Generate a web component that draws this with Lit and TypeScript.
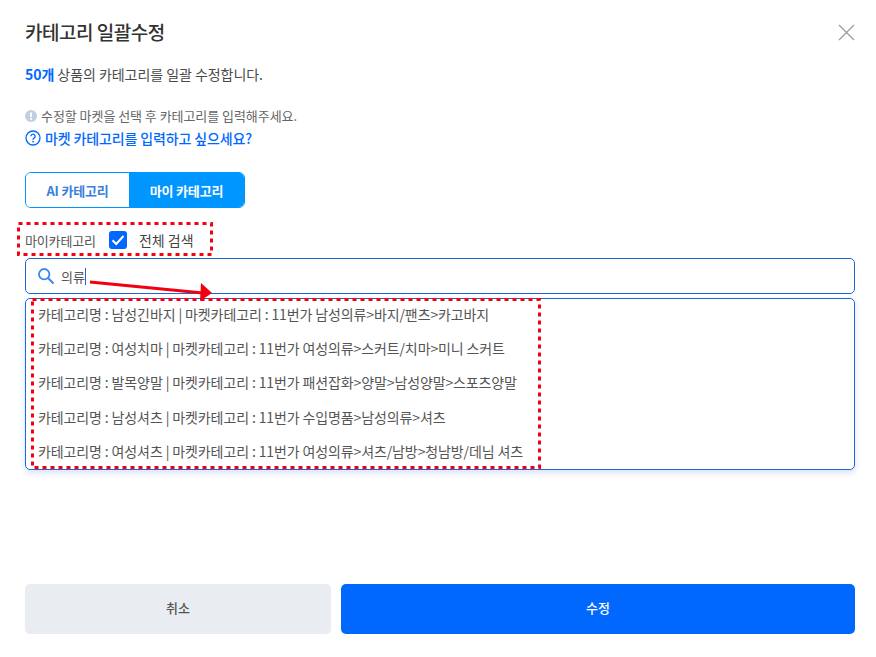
import { LitElement, html, css } from "lit";
import { customElement } from "lit/decorators.js";

const rows = [
  "카테고리명 : 남성긴바지 | 마켓카테고리 : 11번가 남성의류>바지/팬츠>카고바지",
  "카테고리명 : 여성치마 | 마켓카테고리 : 11번가 여성의류>스커트/치마>미니 스커트",
  "카테고리명 : 발목양말 | 마켓카테고리 : 11번가 패션잡화>양말>남성양말>스포츠양말",
  "카테고리명 : 남성셔츠 | 마켓카테고리 : 11번가 수입명품>남성의류>셔츠",
  "카테고리명 : 여성셔츠 | 마켓카테고리 : 11번가 여성의류>셔츠/남방>청남방/데님 셔츠",
];

@customElement("app-root")
export class AppRoot extends LitElement {
  static styles = css`
    :host {
      display: block;
      position: relative;
      width: 876px;
      height: 657px;
      box-sizing: border-box;
      padding: 20px 21px 0 25px;
      background: #fff;
      overflow: hidden;
      font-family: "Noto Sans CJK KR", sans-serif;
      color: #4a4a4a;
    }
    .head { display: flex; justify-content: space-between; align-items: center; height: 24px; }
    h1 { margin: 0; font-size: 19px; line-height: 24px; font-weight: 500; color: #333; letter-spacing: -0.5px; }
    .close { display: block; margin-right: -1px; }
    .sub { margin: 20px 0 0; height: 20px; font-size: 14px; line-height: 20px; letter-spacing: -0.05px; }
    .sub b { color: #0068ff; font-weight: 700; }
    .hint { margin-top: 23px; height: 18px; display: flex; align-items: center; gap: 4px; font-size: 13px; line-height: 18px; letter-spacing: -0.05px; color: #666; }
    .link { margin-top: 3px; height: 20px; display: flex; align-items: center; gap: 4px; font-size: 14px; line-height: 20px; font-weight: 500; color: #0068ff; letter-spacing: -0.13px; }
    .tabs { margin-top: 24px; display: flex; width: 220px; height: 36px; box-sizing: border-box; border: 1px solid #0096ff; border-radius: 6px; overflow: hidden; }
    .tab { display: flex; align-items: center; justify-content: center; font-size: 13px; font-weight: 700; letter-spacing: -0.2px; }
    .tab.off { width: 103px; color: #3d7fdc; background: #fff; }
    .tab.on { flex: 1; color: #fff; background: #0096ff; }
    .filter { margin-top: 20px; height: 24px; display: flex; align-items: center; font-size: 13px; letter-spacing: -0.15px; color: #555; }
    .check { width: 18px; height: 18px; margin: 0 12px 0 13px; border-radius: 3px; background: #0068ff; display: flex; align-items: center; justify-content: center; }
    .all { font-size: 14px; letter-spacing: 0; color: #444; }
    .search { margin-top: 6px; height: 36px; box-sizing: border-box; border: 1px solid #1f66d6; border-radius: 5px; display: flex; align-items: center; padding-left: 11px; font-size: 13px; color: #555; }
    .search svg { margin-right: 6px; }
    .caret { width: 1px; height: 17px; background: #1f66d6; }
    .list { margin-top: 4px; height: 172px; box-sizing: border-box; border: 1px solid #1f66d6; border-radius: 5px; padding: 0 12px; box-shadow: 0 3px 6px rgba(60, 110, 200, 0.2); }
    .rows { margin-top: -2px; }
    .row { height: 34.2px; display: flex; align-items: center; font-size: 14px; letter-spacing: -0.12px; color: #555; white-space: nowrap; }
    .actions { margin-top: 114px; display: flex; gap: 10px; }
    .btn { height: 50px; box-sizing: border-box; padding-bottom: 3px; border-radius: 5px; display: flex; align-items: center; justify-content: center; font-size: 13px; font-weight: 500; }
    .cancel { width: 306px; background: #e9edf2; color: #555; }
    .ok { flex: 1; background: #0068ff; color: #fff; }
    .mark { position: absolute; pointer-events: none; fill: none; stroke: #f00010; stroke-width: 3; stroke-dasharray: 4 4; }
    .m1 { left: 17px; top: 222px; }
    .m2 { left: 31px; top: 298px; }
    .arrow { position: absolute; left: 85px; top: 275px; pointer-events: none; }
  `;

  render() {
    return html`
      <div class="head">
        <h1>카테고리 일괄수정</h1>
        <svg class="close" width="20" height="20" viewBox="0 0 20 20"><path d="M3 3 L18 18 M18 3 L3 18" stroke="#999" stroke-width="1.2" fill="none"/></svg>
      </div>
      <p class="sub"><b>50개</b> 상품의 카테고리를 일괄 수정합니다.</p>
      <div class="hint">
        <svg width="12" height="12" viewBox="0 0 12 12"><circle cx="6" cy="6" r="6" fill="#c2cfe0"/><rect x="5" y="2.5" width="2" height="4.5" fill="#fff"/><rect x="5" y="8" width="2" height="1.7" fill="#fff"/></svg>
        <span>수정할 마켓을 선택 후 카테고리를 입력해주세요.</span>
      </div>
      <div class="link">
        <svg width="16" height="16" viewBox="0 0 16 16"><circle cx="8" cy="8" r="7" fill="none" stroke="#0068ff" stroke-width="1.3"/><path d="M5.9 6.3a2.1 2.1 0 1 1 3.2 1.8c-.7.4-1.1.8-1.1 1.6" fill="none" stroke="#0068ff" stroke-width="1.3"/><circle cx="8" cy="11.6" r=".85" fill="#0068ff"/></svg>
        <span>마켓 카테고리를 입력하고 싶으세요?</span>
      </div>
      <div class="tabs">
        <div class="tab off">AI 카테고리</div>
        <div class="tab on">마이 카테고리</div>
      </div>
      <div class="filter">
        <span>마이카테고리</span>
        <span class="check"><svg width="14" height="12" viewBox="0 0 14 12"><path d="M1.5 6.2 L5.2 10 L12.5 2" fill="none" stroke="#fff" stroke-width="2"/></svg></span>
        <span class="all">전체 검색</span>
      </div>
      <div class="search">
        <svg width="18" height="18" viewBox="0 0 18 18"><circle cx="7.2" cy="7.2" r="5.2" fill="none" stroke="#3a86f0" stroke-width="1.8"/><path d="M11 11 L16.5 16.5" stroke="#3a86f0" stroke-width="2"/></svg>
        <span>의류</span><span class="caret"></span>
      </div>
      <div class="list">
        <div class="rows">${rows.map((r) => html`<div class="row">${r}</div>`)}</div>
      </div>
      <div class="actions">
        <div class="btn cancel">취소</div>
        <div class="btn ok">수정</div>
      </div>
      <svg class="mark m1" width="196" height="34" viewBox="0 0 196 34"><rect x="1.5" y="1.5" width="193" height="31"/></svg>
      <svg class="mark m2" width="510" height="171" viewBox="0 0 510 171"><rect x="1.5" y="1.5" width="507" height="168"/></svg>
      <svg class="arrow" width="135" height="30" viewBox="0 0 135 30">
        <path d="M5 7 L118 18" stroke="#f00010" stroke-width="3" fill="none"/>
        <path d="M116 8 L127 18 L115 26 Z" fill="#f00010"/>
      </svg>
    `;
  }
}
